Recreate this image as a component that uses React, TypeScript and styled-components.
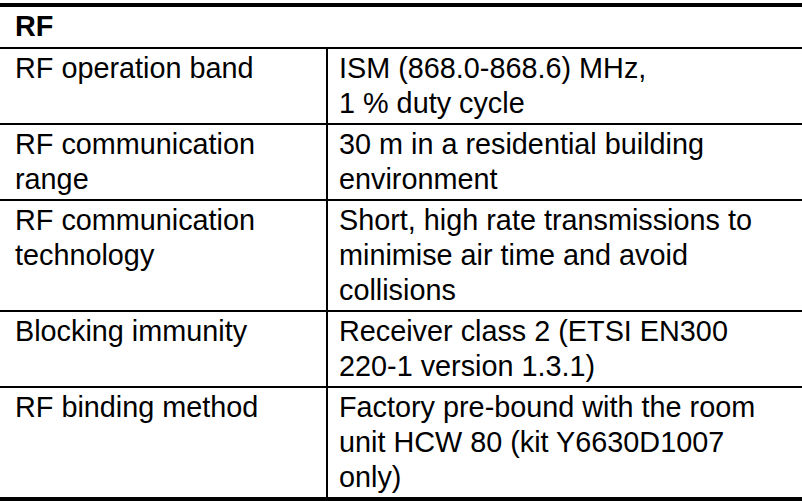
import React from 'react';
import styled, { createGlobalStyle } from 'styled-components';

const GlobalStyle = createGlobalStyle`
  html, body {
    margin: 0;
    padding: 0;
    background: #ffffff;
    overflow: hidden;
  }
  body {
    font-family: "Liberation Sans", Arial, sans-serif;
    color: #000000;
  }
`;

const rows: { label: string[]; value: string[] }[] = [
  { label: ['RF operation band'], value: ['ISM (868.0-868.6) MHz,', '1 % duty cycle'] },
  { label: ['RF communication', 'range'], value: ['30 m in a residential building', 'environment'] },
  {
    label: ['RF communication', 'technology'],
    value: ['Short, high rate transmissions to', 'minimise air time and avoid', 'collisions'],
  },
  { label: ['Blocking immunity'], value: ['Receiver class 2 (ETSI EN300', '220-1 version 1.3.1)'] },
  {
    label: ['RF binding method'],
    value: ['Factory pre-bound with the room', 'unit HCW 80 (kit Y6630D1007', 'only)'],
  },
];

const App: React.FC = () => {
  return (
    <>
      <GlobalStyle />
      <Page>
        <SpecTable>
          <HeaderRow>RF</HeaderRow>
          {rows.map((row, i) => (
            <Row key={i} $last={i === rows.length - 1}>
              <LabelCell>
                {row.label.map((line) => (
                  <Line key={line}>{line}</Line>
                ))}
              </LabelCell>
              <ValueCell>
                {row.value.map((line) => (
                  <Line key={line}>{line}</Line>
                ))}
              </ValueCell>
            </Row>
          ))}
        </SpecTable>
      </Page>
    </>
  );
};

const Page = styled.div`
  width: 802px;
  height: 501px;
  padding-top: 3px;
  box-sizing: border-box;
`;

const SpecTable = styled.div`
  display: flex;
  flex-direction: column;
  width: 820px;
  border-top: 4px solid #000;
  border-bottom: 4px solid #000;
`;

const HeaderRow = styled.div`
  font-weight: 700;
  font-size: 28.8px;
  line-height: 35px;
  padding: 2px 0 3px 15px;
  border-bottom: 2px solid #000;
`;

const Row = styled.div<{ $last?: boolean }>`
  display: grid;
  grid-template-columns: 328px 1fr;
  border-bottom: ${({ $last }) => ($last ? 'none' : '2px solid #000')};
`;

const LabelCell = styled.div`
  font-size: 28.8px;
  line-height: 35px;
  padding: 2px 0 2px 15px;
  border-right: 2px solid #000;
`;

const ValueCell = styled.div`
  font-size: 28.8px;
  line-height: 35px;
  padding: 2px 0 2px 11px;
`;

const Line = styled.div`
  white-space: nowrap;
`;

export default App;
